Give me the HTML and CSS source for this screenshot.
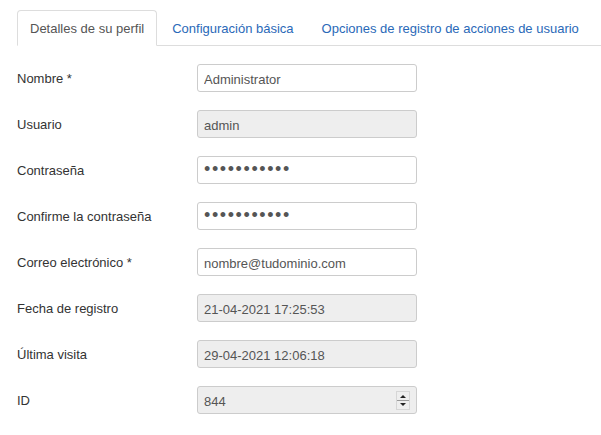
FILE: index.html
```html
<!DOCTYPE html>
<html lang="es">
<head>
<meta charset="utf-8">
<link rel="stylesheet" href="styles.css">
</head>
<body>
<div class="page">
  <ul class="tabs">
    <li class="tab active"><a>Detalles de su perfil</a></li>
    <li class="tab"><a>Configuración básica</a></li>
    <li class="tab"><a>Opciones de registro de acciones de usuario</a></li>
  </ul>
  <form class="form">
    <div class="group"><label class="label">Nombre *</label><div class="controls"><input class="input" type="text" value="Administrator"></div></div>
    <div class="group"><label class="label">Usuario</label><div class="controls"><input class="input" type="text" value="admin" readonly></div></div>
    <div class="group"><label class="label">Contraseña</label><div class="controls"><input class="input pass" type="password" value="abcdefghijk"></div></div>
    <div class="group"><label class="label">Confirme la contraseña</label><div class="controls"><input class="input pass" type="password" value="abcdefghijk"></div></div>
    <div class="group"><label class="label">Correo electrónico *</label><div class="controls"><input class="input" type="text" value="nombre@tudominio.com"></div></div>
    <div class="group"><label class="label">Fecha de registro</label><div class="controls"><input class="input" type="text" value="21-04-2021 17:25:53" readonly></div></div>
    <div class="group"><label class="label">Última visita</label><div class="controls"><input class="input" type="text" value="29-04-2021 12:06:18" readonly></div></div>
    <div class="group"><label class="label">ID</label><div class="controls spin-wrap"><input class="input" type="text" value="844" readonly><span class="spinner"><span class="sp-up"></span><span class="sp-down"></span></span></div></div>
  </form>
</div>
</body>
</html>
```
FILE: styles.css
```css
html, body { margin: 0; padding: 0; background: #fff; }
body { font-family: "Liberation Sans", Arial, sans-serif; font-size: 13px; line-height: 18px; color: #333; }
.page { padding: 10px 0 0 17px; }
.tabs { list-style: none; margin: 0 0 18px 0; padding: 0; display: flex; border-bottom: 1px solid #ddd; }
.tab { margin-right: 2px; margin-bottom: -1px; }
.tab a { display: block; padding: 9px 12px 7px; line-height: 18px; border: 1px solid transparent; border-radius: 4px 4px 0 0; color: #2a69b8; }
.tab.active a { color: #555; background: #fff; border-color: #ddd #ddd transparent; }
.form { margin: 0; }
.group { display: flex; margin-bottom: 18px; }
.label { width: 180px; flex: none; padding-top: 6px; line-height: 18px; color: #333; }
.controls { position: relative; }
.input { box-sizing: border-box; width: 220px; height: 28px; padding: 5px 6px 3px; border: 1px solid #ccc; border-radius: 3px; font-family: "Liberation Sans", Arial, sans-serif; font-size: 13px; line-height: 18px; color: #555; background: #fff; outline: none; margin: 0; display: block; }
.input[readonly] { background: #eee; }
.pass { font-size: 18px; letter-spacing: 1.6px; padding: 3px 6px 5px; color: #555; }
.spinner { position: absolute; left: 199px; top: 5px; width: 12px; height: 17px; border: 1px solid #d6d6d6; background: #eee; display: flex; flex-direction: column; }
.sp-up, .sp-down { flex: 1; position: relative; }
.sp-up { border-bottom: 1px solid #999; }
.sp-up::after { content: ""; position: absolute; left: 3px; top: 3px; border-left: 3px solid transparent; border-right: 3px solid transparent; border-bottom: 3px solid #222; }
.sp-down::after { content: ""; position: absolute; left: 3px; top: 2px; border-left: 3px solid transparent; border-right: 3px solid transparent; border-top: 3px solid #222; }
```
